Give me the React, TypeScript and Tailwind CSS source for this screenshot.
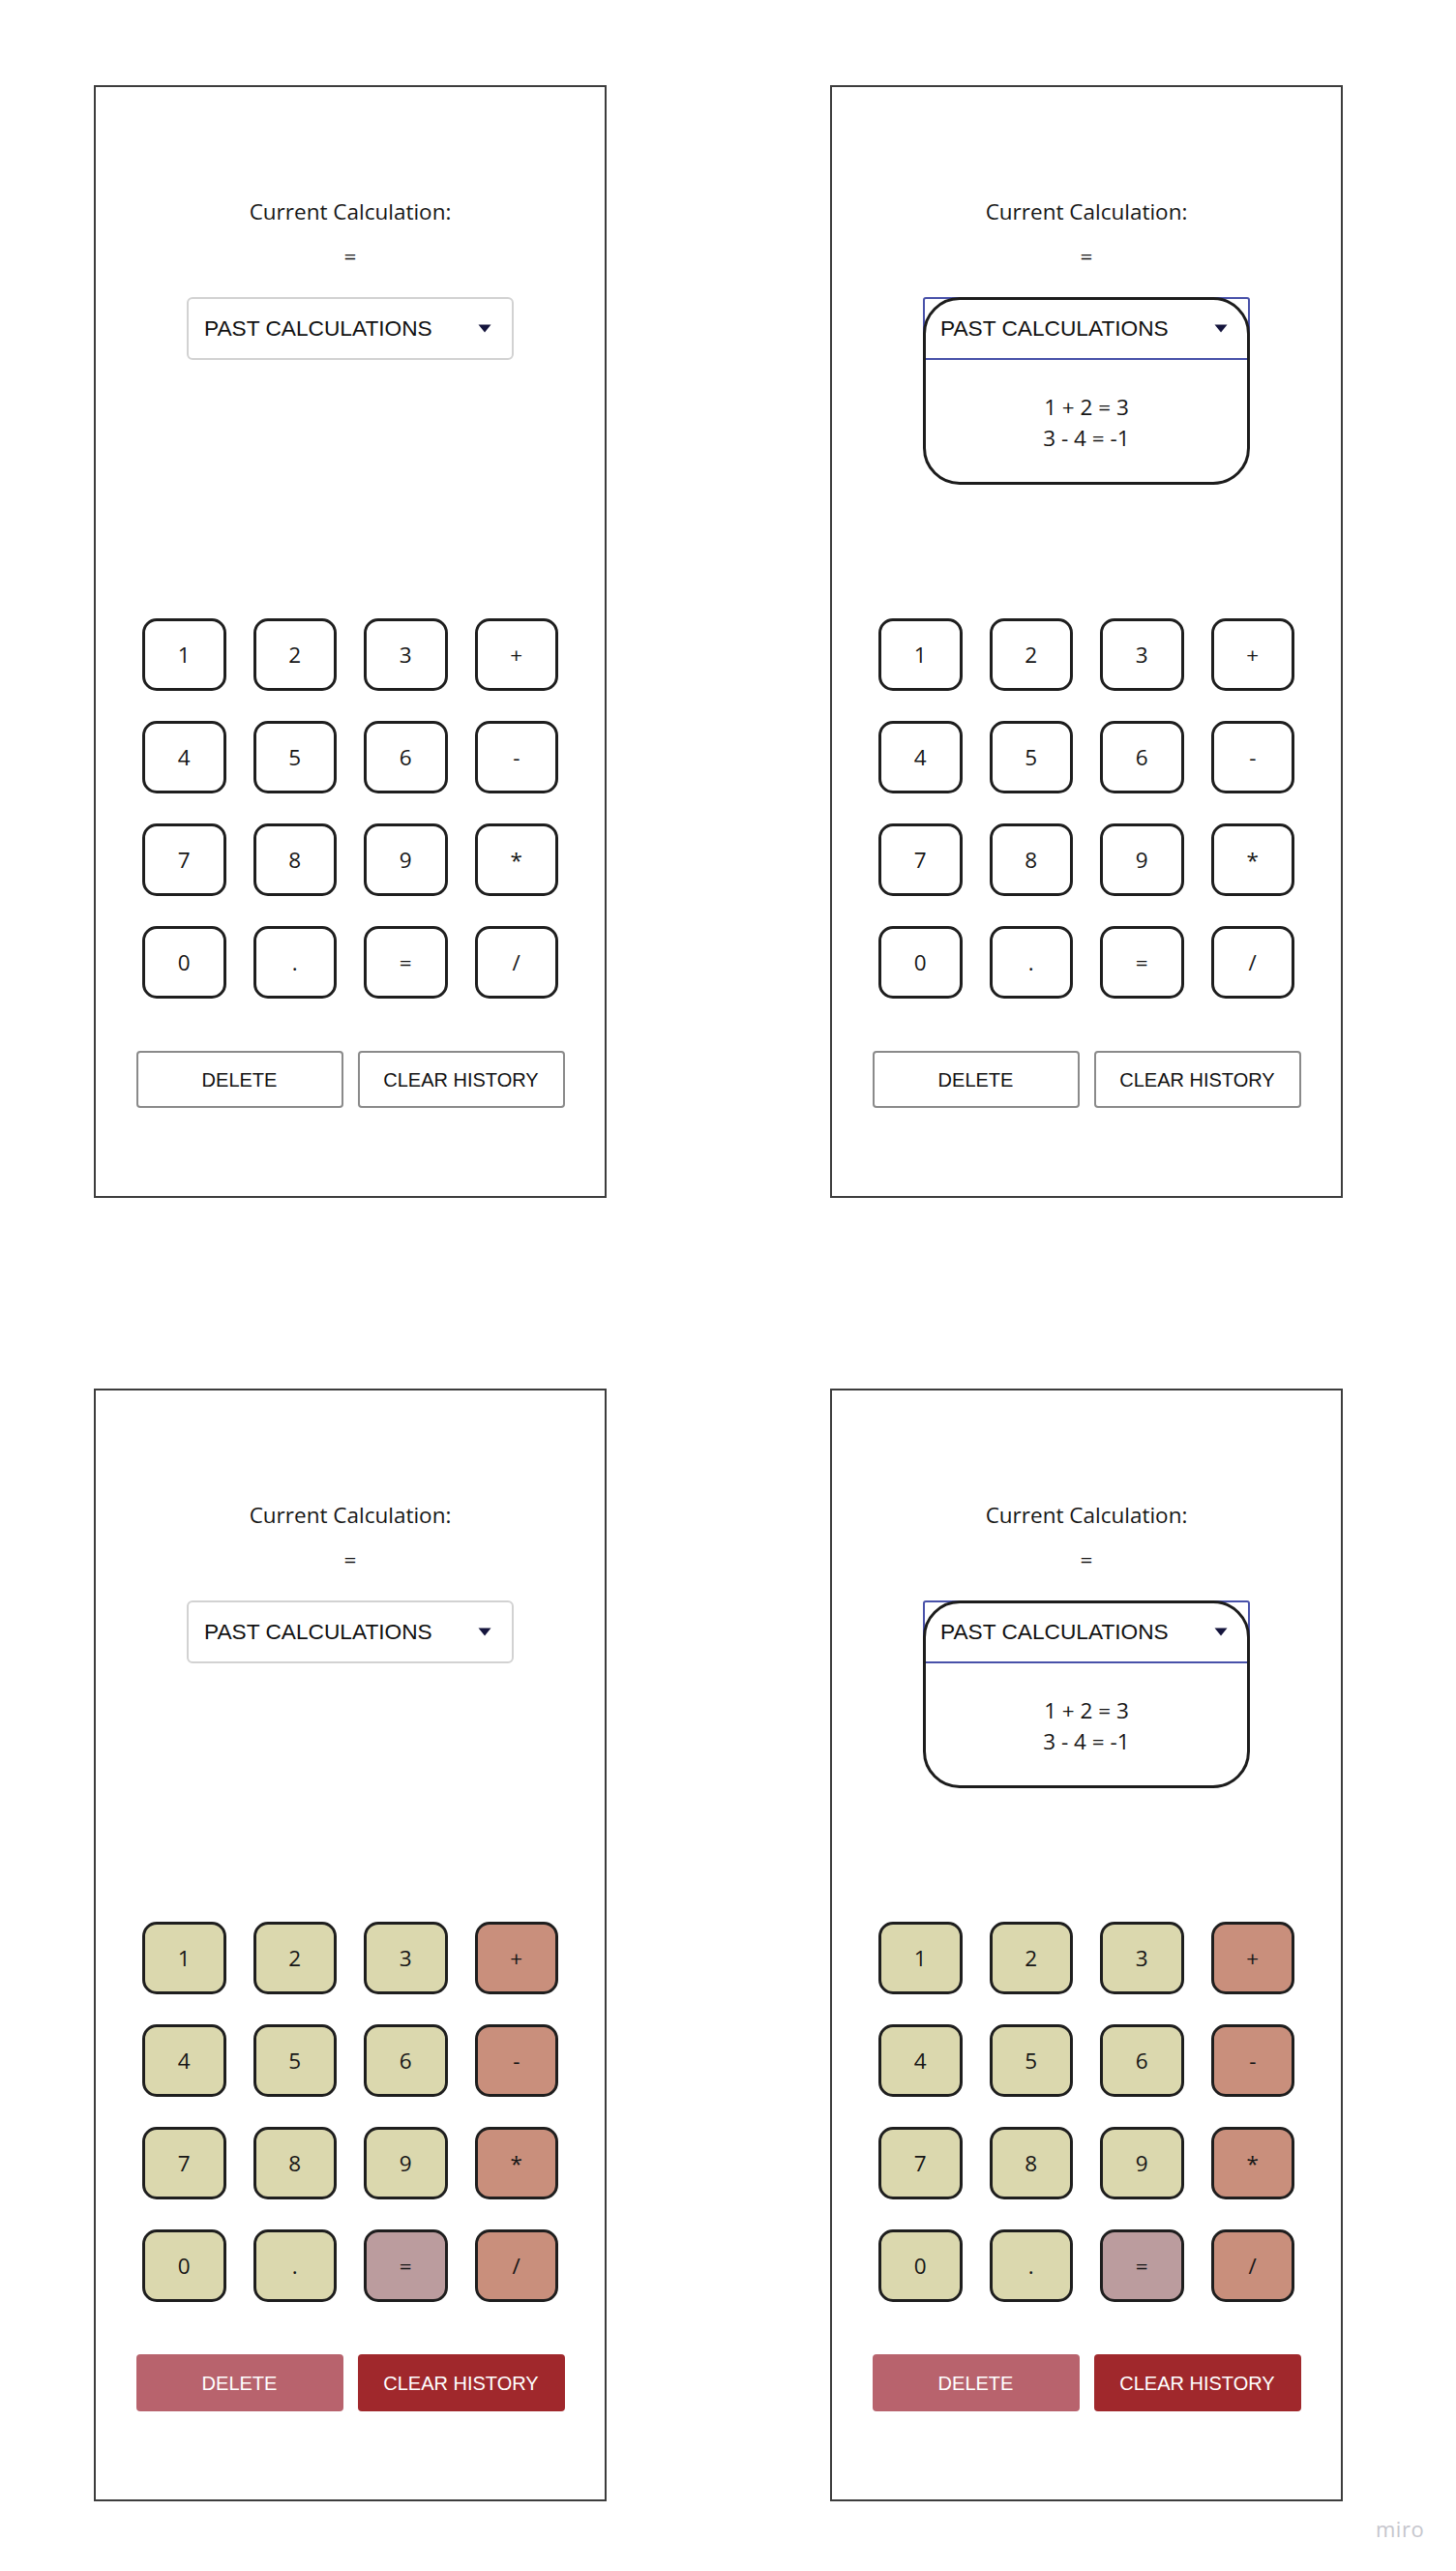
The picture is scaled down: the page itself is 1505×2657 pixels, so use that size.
import React from "react";

const keys = ["1", "2", "3", "+", "4", "5", "6", "-", "7", "8", "9", "*", "0", ".", "=", "/"];
const ops = new Set(["+", "-", "*", "/"]);

function Caret() {
  return (
    <svg width="14" height="9" viewBox="0 0 14 9" className="shrink-0">
      <path d="M0.5 0.5 L13.5 0.5 L7 8.5 Z" fill="#15153d" />
    </svg>
  );
}

function Header({ open }: { open: boolean }) {
  return (
    <div
      className={
        "flex h-[65px] w-[338px] items-center justify-between pl-[16px] pr-[21px] " +
        (open
          ? "border-[2.5px] border-[#4851a9] rounded-[3px]"
          : "border-[2.5px] border-[#d2d2d2] rounded-[6px]")
      }
    >
      <span className="text-[22.7px] leading-none text-[#111111] [font-family:'Liberation_Sans',Arial,sans-serif]">
        PAST CALCULATIONS
      </span>
      <Caret />
    </div>
  );
}

function Dropdown({ open }: { open: boolean }) {
  if (!open) return <Header open={false} />;
  return (
    <div className="relative h-[194px] w-[338px]">
      <Header open={true} />
      <div className="flex flex-col items-center pt-[33px] text-[22.5px] leading-[32px] text-[#161616]">
        <span>1 + 2 = 3</span>
        <span>3 - 4 = -1</span>
      </div>
      <div className="pointer-events-none absolute inset-0 rounded-[38px] border-[3px] border-[#1c1c1c]" />
    </div>
  );
}

function Key({ k, colored }: { k: string; colored: boolean }) {
  let bg = "bg-white";
  if (colored) {
    if (k === "=") bg = "bg-[#bb9c9e]";
    else if (ops.has(k)) bg = "bg-[#c98f7c]";
    else bg = "bg-[#dbd8ae]";
  }
  return (
    <div
      className={
        "flex h-[75px] items-center justify-center rounded-[15px] border-[3px] border-[#1e1e1e] text-[22.5px] text-[#161616] " +
        bg
      }
    >
      {k}
    </div>
  );
}

function Frame({ open, colored }: { open: boolean; colored: boolean }) {
  return (
    <div className="flex h-[1150px] w-[530px] flex-col items-center border-2 border-[#3d3d3d] bg-white pt-[114px]">
      <div className="text-[22.5px] leading-[30px] text-[#161616]">Current Calculation:</div>
      <div className="mt-[16px] text-[22.5px] leading-[30px] text-[#161616]">=</div>
      <div className="mt-[27px] h-[332px]">
        <Dropdown open={open} />
      </div>
      <div className="grid w-[430px] grid-cols-4 gap-x-[28px] gap-y-[31px]">
        {keys.map((k) => (
          <Key key={k} k={k} colored={colored} />
        ))}
      </div>
      <div className="mt-[54px] flex gap-[15px] [font-family:'Liberation_Sans',Arial,sans-serif] text-[20px]">
        {colored ? (
          <>
            <div className="flex h-[59px] w-[214px] items-center justify-center rounded-[4px] bg-[#b8636d] text-white">
              DELETE
            </div>
            <div className="flex h-[59px] w-[214px] items-center justify-center rounded-[4px] bg-[#a0282c] text-white">
              CLEAR HISTORY
            </div>
          </>
        ) : (
          <>
            <div className="flex h-[59px] w-[214px] items-center justify-center rounded-[4px] border-2 border-[#8a8a8a] text-[#111111]">
              DELETE
            </div>
            <div className="flex h-[59px] w-[214px] items-center justify-center rounded-[4px] border-2 border-[#8a8a8a] text-[#111111]">
              CLEAR HISTORY
            </div>
          </>
        )}
      </div>
    </div>
  );
}

export default function App() {
  return (
    <div className="relative h-[2657px] w-[1505px] overflow-hidden bg-white [font-family:'Open_Sans',sans-serif]">
      <div className="grid grid-cols-[530px_530px] gap-x-[231px] gap-y-[197px] pl-[97px] pt-[88px]">
        <Frame open={false} colored={false} />
        <Frame open={true} colored={false} />
        <Frame open={false} colored={true} />
        <Frame open={true} colored={true} />
      </div>
      <div className="absolute left-[1422px] top-[2602px] text-[22px] leading-none tracking-[0.5px] text-[#c6c6cd]">
        miro
      </div>
    </div>
  );
}
